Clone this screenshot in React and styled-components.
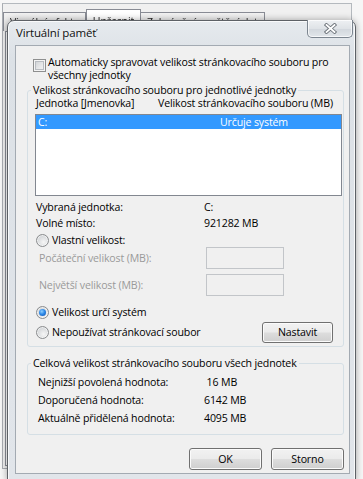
import React from 'react';
import styled, { createGlobalStyle } from 'styled-components';

const GlobalStyle = createGlobalStyle`
  html, body { margin: 0; padding: 0; background: #f6f6f6; }
  body {
    font-family: "Open Sans", "Noto Sans", sans-serif;
    font-size: 10.6px;
    letter-spacing: -0.15px;
    color: #000;
  }
  * { box-sizing: border-box; }
`;

const Desktop = styled.div`
  position: relative;
  width: 363px;
  height: 479px;
  overflow: hidden;
  background: #f6f6f6;
`;

const ParentWin = styled.div`
  margin: 3px 0 0 2px;
  width: 350px;
  height: 466px;
  border-top: 1px solid #b4b9be;
  border-left: 1px solid #a9adb2;
  border-right: 1px solid #b4b9be;
  border-bottom: 1px solid #a9adb2;
  background: #f0f0f0;
  display: flex;
  flex-direction: column;
`;

const TabStrip = styled.div`
  display: flex;
  align-items: flex-end;
  padding: 5px 0 0 1px;
  height: 27px;
  filter: blur(0.6px);
`;

const Tab = styled.div`
  height: ${p => (p.$active ? 22 : 19)}px;
  padding: ${p => (p.$active ? 4 : 2)}px 6px 0;
  border: 1px solid #898c95;
  border-bottom: none;
  margin-left: ${p => (p.$active ? 0 : -1)}px;
  background: ${p => (p.$active ? '#fff' : 'linear-gradient(#f2f2f2, #e3e3e3)')};
  color: #222;
  white-space: nowrap;
  line-height: 14px;
`;

const TabPanel = styled.div`
  flex: 1;
  margin: 0 2px 2px 2px;
  border: 1px solid #898c95;
  background: #fff;
`;

const Dialog = styled.div`
  position: absolute;
  left: 7px;
  top: 20px;
  width: 349px;
  height: 461px;
  border: 1px solid #5d6166;
  border-radius: 7px 7px 0 0;
  background: linear-gradient(180deg, #e6eaee 0%, #dce1e6 8%, #e1e5ea 100%);
  box-shadow: 0 0 7px rgba(0, 0, 0, 0.35), inset 0 0 0 1px rgba(255, 255, 255, 0.75);
  display: flex;
  flex-direction: column;
`;

const TitleBar = styled.div`
  display: flex;
  align-items: flex-start;
  justify-content: space-between;
  height: 24px;
  padding-left: 8px;
`;

const Title = styled.div`
  line-height: 24px;
  font-size: 11.5px;
  color: #111;
  text-shadow: 0 0 6px rgba(255, 255, 255, 0.9);
`;

const CloseButton = styled.div`
  width: 46px;
  height: 18px;
  margin: -1px 2px 0 0;
  border: 1px solid #7c858f;
  border-top: none;
  border-radius: 0 0 5px 5px;
  background: linear-gradient(180deg, #eef0f3 0%, #dfe3e7 50%, #d2d7dd 52%, #e2e6ea 100%);
  box-shadow: inset 0 0 0 1px rgba(255, 255, 255, 0.7);
  display: flex;
  align-items: center;
  justify-content: center;
`;

const Client = styled.div`
  margin: 0 5px 0 7px;
  height: 429px;
  background: #f0f0f0;
  border: 1px solid #a3aab2;
  padding: 10px 5px 0 11px;
  display: flex;
  flex-direction: column;
`;

const CheckRow = styled.div`
  display: flex;
  align-items: flex-start;
  gap: 2px;
  padding-left: 6px;
  line-height: 13px;
  white-space: nowrap;
`;

const CheckBox = styled.span`
  flex: none;
  width: 13px;
  height: 13px;
  margin-top: 3px;
  border: 1px solid #8e8f8f;
  background: linear-gradient(135deg, #c9ccd0 0%, #e8e9ea 60%, #f4f4f4 100%);
  box-shadow: inset 0 0 0 1px #f4f4f4, inset 0 0 0 2px #b8bcc1;
`;

const Group = styled.fieldset`
  margin: ${p => p.$top}px 0 0 0;
  padding: 0 0 ${p => p.$bottom}px 0;
  border: 1px solid #d5dfe5;
  border-radius: 3px;
  min-width: 0;
`;

const Legend = styled.legend`
  margin-left: 3px;
  padding: 0 2px;
  line-height: 13px;
  white-space: nowrap;
`;

const HeaderRow = styled.div`
  display: flex;
  padding-left: 8px;
  line-height: 13px;
  white-space: nowrap;
`;

const Col = styled.span`
  flex: none;
  width: ${p => p.$w}px;
`;

const ListBox = styled.div`
  margin: 4px 1px 0 7px;
  height: 82px;
  border: 1px solid #828790;
  background: #fff;
`;

const ListRow = styled.div`
  display: flex;
  height: 14px;
  line-height: 14px;
  padding-left: 2px;
  background: ${p => (p.$selected ? '#3399ff' : 'transparent')};
  color: ${p => (p.$selected ? '#fff' : '#000')};
  white-space: nowrap;
`;

const InfoRow = styled.div`
  display: flex;
  align-items: center;
  height: ${p => p.$h}px;
  margin-top: ${p => p.$top || 0}px;
  padding-left: ${p => p.$indent}px;
  color: ${p => (p.$disabled ? '#9a9a9a' : '#000')};
  white-space: nowrap;
`;

const RadioRow = styled.div`
  display: flex;
  align-items: center;
  gap: 3px;
  height: ${p => p.$h}px;
  margin-top: ${p => p.$top}px;
  padding-left: 8px;
  white-space: nowrap;
`;

const Radio = styled.span`
  flex: none;
  position: relative;
  width: 13px;
  height: 13px;
  border-radius: 50%;
  border: 1px solid #8a8c8e;
  background: radial-gradient(circle at 60% 65%, #f6f6f6 0%, #dadcde 55%, #c4c7ca 100%);
  box-shadow: inset 0 0 0 1px rgba(255, 255, 255, 0.6);

  &::after {
    content: '';
    display: ${p => (p.$checked ? 'block' : 'none')};
    position: absolute;
    left: 2px;
    top: 2px;
    width: 7px;
    height: 7px;
    border-radius: 50%;
    background: radial-gradient(circle at 40% 35%, #8fd0ff 0%, #2f8ae8 45%, #0d4fae 100%);
  }
`;

const Spacer = styled.span`
  flex: 1;
`;

const TextBox = styled.span`
  flex: none;
  width: 78px;
  height: 22px;
  border: 1px solid #c2c5c9;
  background: #f0f0f0;
`;

const Button = styled.div`
  flex: none;
  width: ${p => p.$w}px;
  height: ${p => p.$h}px;
  margin-right: ${p => p.$right || 0}px;
  border: 1px solid #707070;
  border-radius: 3px;
  background: linear-gradient(180deg, #f2f2f2 0%, #ebebeb 48%, #dddddd 52%, #cfcfcf 100%);
  box-shadow: inset 0 0 0 1px #fbfbfb;
  display: flex;
  align-items: center;
  justify-content: center;
  color: #000;
`;

const ButtonRow = styled.div`
  display: flex;
  justify-content: flex-end;
  gap: 9px;
  margin-top: 13px;
`;

const CloseIcon = () => (
  <svg width="13" height="11" viewBox="0 0 13 11">
    <g strokeLinecap="square">
      <path d="M2.5 2 L10.5 9 M10.5 2 L2.5 9" stroke="#6d737a" strokeWidth="3.6" />
      <path d="M2.5 2 L10.5 9 M10.5 2 L2.5 9" stroke="#ffffff" strokeWidth="1.8" />
    </g>
  </svg>
);

export default function App() {
  return (
    <Desktop>
      <GlobalStyle />
      <ParentWin>
        <TabStrip>
          <Tab>Vizuální efekty</Tab>
          <Tab $active>Upřesnit</Tab>
          <Tab>Zabránění spuštění dat</Tab>
        </TabStrip>
        <TabPanel />
      </ParentWin>

      <Dialog>
        <TitleBar>
          <Title>Virtuální paměť</Title>
          <CloseButton>
            <CloseIcon />
          </CloseButton>
        </TitleBar>
        <Client>
          <CheckRow>
            <CheckBox />
            <span>
              Automaticky spravovat velikost stránkovacího souboru pro
              <br />
              všechny jednotky
            </span>
          </CheckRow>

          <Group $top={2} $bottom={3}>
            <Legend>Velikost stránkovacího souboru pro jednotlivé jednotky</Legend>
            <HeaderRow>
              <Col $w={122}>Jednotka [Jmenovka]</Col>
              <span>Velikost stránkovacího souboru (MB)</span>
            </HeaderRow>
            <ListBox>
              <ListRow $selected>
                <Col $w={182}>C:</Col>
                <span>Určuje systém</span>
              </ListRow>
            </ListBox>

            <InfoRow $h={16} $top={3} $indent={8}>
              <Col $w={168}>Vybraná jednotka:</Col>
              <span>C:</span>
            </InfoRow>
            <InfoRow $h={16} $indent={8}>
              <Col $w={168}>Volné místo:</Col>
              <span>921282 MB</span>
            </InfoRow>

            <RadioRow $h={14} $top={2}>
              <Radio />
              <span>Vlastní velikost:</span>
            </RadioRow>
            <InfoRow $h={22} $indent={11} $disabled>
              <Col $w={167}>Počáteční velikost (MB):</Col>
              <TextBox />
            </InfoRow>
            <InfoRow $h={22} $top={5} $indent={11} $disabled>
              <Col $w={167}>Největší velikost (MB):</Col>
              <TextBox />
            </InfoRow>

            <RadioRow $h={16} $top={8}>
              <Radio $checked />
              <span>Velikost určí systém</span>
            </RadioRow>
            <RadioRow $h={22} $top={1}>
              <Radio />
              <span>Nepoužívat stránkovací soubor</span>
              <Spacer />
              <Button $w={71} $h={21} $right={10}>Nastavit</Button>
            </RadioRow>
          </Group>

          <Group $top={10} $bottom={7}>
            <Legend>Celková velikost stránkovacího souboru všech jednotek</Legend>
            <InfoRow $h={18} $top={3} $indent={10}>
              <Col $w={166}>Nejnižší povolená hodnota:</Col>
              <span>&nbsp;16 MB</span>
            </InfoRow>
            <InfoRow $h={18} $indent={10}>
              <Col $w={166}>Doporučená hodnota:</Col>
              <span>6142 MB</span>
            </InfoRow>
            <InfoRow $h={18} $indent={10}>
              <Col $w={166}>Aktuálně přidělená hodnota:</Col>
              <span>4095 MB</span>
            </InfoRow>
          </Group>

          <ButtonRow>
            <Button $w={73} $h={22}>OK</Button>
            <Button $w={73} $h={22}>Storno</Button>
          </ButtonRow>
        </Client>
      </Dialog>
    </Desktop>
  );
}
